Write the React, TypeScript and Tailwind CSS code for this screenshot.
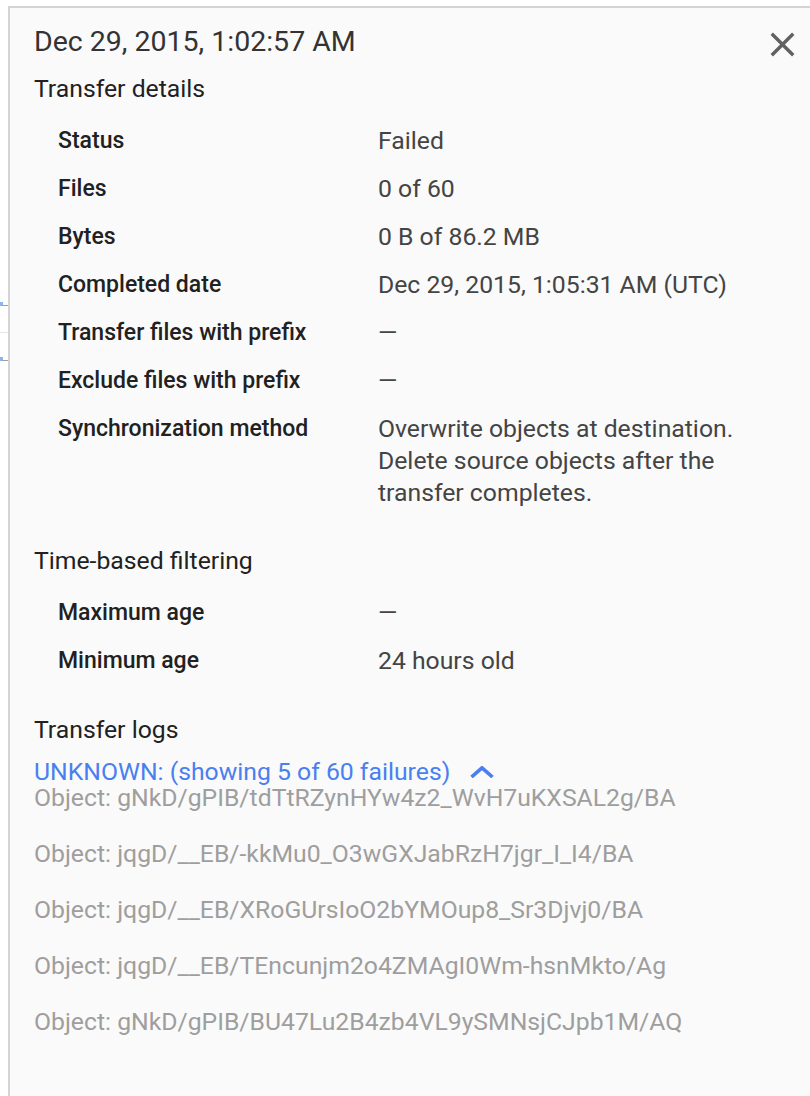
import React from 'react';

const details: [string, string[]][] = [
  ['Status', ['Failed']],
  ['Files', ['0 of 60']],
  ['Bytes', ['0 B of 86.2 MB']],
  ['Completed date', ['Dec 29, 2015, 1:05:31 AM (UTC)']],
  ['Transfer files with prefix', ['—']],
  ['Exclude files with prefix', ['—']],
  [
    'Synchronization method',
    ['Overwrite objects at destination.', 'Delete source objects after the', 'transfer completes.'],
  ],
];

const filtering: [string, string[]][] = [
  ['Maximum age', ['—']],
  ['Minimum age', ['24 hours old']],
];

const logs = [
  'Object: gNkD/gPIB/tdTtRZynHYw4z2_WvH7uKXSAL2g/BA',
  'Object: jqgD/__EB/-kkMu0_O3wGXJabRzH7jgr_I_I4/BA',
  'Object: jqgD/__EB/XRoGUrsIoO2bYMOup8_Sr3Djvj0/BA',
  'Object: jqgD/__EB/TEncunjm2o4ZMAgI0Wm-hsnMkto/Ag',
  'Object: gNkD/gPIB/BU47Lu2B4zb4VL9ySMNsjCJpb1M/AQ',
];

const Rows = ({ rows }: { rows: [string, string[]][] }) => (
  <div className="flex flex-col">
    {rows.map(([label, value]) => (
      <div key={label} className="flex py-2">
        <div className="w-[344px] shrink-0 pl-[24px] text-[23px] leading-[32px] font-medium text-[#212121]">
          {label}
        </div>
        <div className="text-[24.75px] leading-[32px] text-[#444444]">
          {value.map(line => (
            <div key={line}>{line}</div>
          ))}
        </div>
      </div>
    ))}
  </div>
);

const App = () => {
  return (
    <div
      className="min-h-screen bg-white pt-[6px] flex"
      style={{ fontFamily: 'Roboto, "Liberation Sans", sans-serif' }}
    >
      <div className="relative w-[8px] shrink-0">
        <div className="absolute left-0 top-[296px] h-[4px] w-[3px] bg-[#8ab4f8]" />
        <div className="absolute left-[2px] top-[299px] h-px w-[6px] bg-[#9e9e9e]" />
        <div className="absolute left-0 top-[326px] h-px w-[8px] bg-[#e6e6e6]" />
        <div className="absolute left-0 top-[351px] h-[4px] w-[3px] bg-[#8ab4f8]" />
        <div className="absolute left-[2px] top-[354px] h-px w-[6px] bg-[#9e9e9e]" />
      </div>
      <div className="flex-1 border-t-2 border-l-2 border-[#d4d4d4] bg-[#fafafa] pl-[24px] pr-[7px] pt-[16px]">
        <div className="flex items-start justify-between">
          <h1 className="text-[28.5px] leading-[36px] text-[#333333]">Dec 29, 2015, 1:02:57 AM</h1>
          <svg viewBox="0 0 24 24" className="h-[41px] w-[41px] fill-[#616161]" aria-hidden="true">
            <path d="M19 6.41L17.59 5 12 10.59 6.41 5 5 6.41 10.59 12 5 17.59 6.41 19 12 13.41 17.59 19 19 17.59 13.41 12z" />
          </svg>
        </div>

        <h2 className="mt-[8px] text-[24.75px] leading-[32px] text-[#212121]">Transfer details</h2>
        <div className="mt-[12px]">
          <Rows rows={details} />
        </div>

        <h2 className="mt-[28px] text-[24.75px] leading-[32px] text-[#212121]">Time-based filtering</h2>
        <div className="mt-[12px]">
          <Rows rows={filtering} />
        </div>

        <h2 className="mt-[29px] text-[24.75px] leading-[32px] text-[#212121]">Transfer logs</h2>
        <div className="mt-[13px] flex items-center gap-[20px] text-[24.75px] leading-[26px] text-[#4a7ff0]">
          <span>UNKNOWN: (showing 5 of 60 failures)</span>
          <svg viewBox="0 0 24 12" className="h-[12px] w-[24px]" aria-hidden="true">
            <polyline points="1.5,11 12,1.8 22.5,11" fill="none" stroke="#4a7ff0" strokeWidth="3.6" />
          </svg>
        </div>
        <div className="flex flex-col gap-[30px]">
          {logs.map(line => (
            <div key={line} className="text-[24.75px] leading-[26px] text-[#9e9e9e]">
              {line}
            </div>
          ))}
        </div>
      </div>
    </div>
  );
};

export default App;
